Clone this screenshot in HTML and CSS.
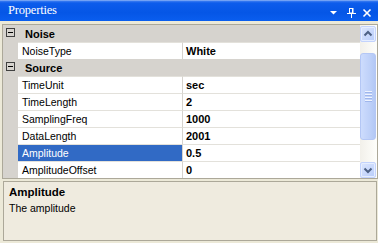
FILE: index.html
```html
<!DOCTYPE html>
<html>
<head>
<meta charset="utf-8">
<link rel="stylesheet" href="styles.css">
</head>
<body>
<div class="window">
  <div class="titlebar">
    <span class="title">Properties</span>
    <svg class="tools" width="45" height="21" viewBox="0 0 45 21">
      <polygon points="1,11 8,11 4.5,14.5" fill="#fff"/>
      <rect x="20.5" y="8.5" width="3" height="4.5" fill="none" stroke="#fff" stroke-width="1"/>
      <rect x="23" y="8" width="1.5" height="5" fill="#fff"/>
      <rect x="18" y="13" width="9" height="1" fill="#fff"/>
      <rect x="22" y="14" width="1" height="4" fill="#fff"/>
      <line x1="34.5" y1="9.5" x2="41.5" y2="16.5" stroke="#fff" stroke-width="1.6"/>
      <line x1="41.5" y1="9.5" x2="34.5" y2="16.5" stroke="#fff" stroke-width="1.6"/>
    </svg>
  </div>
  <div class="grid">
    <div class="rows">
      <div class="cat"><span class="box"><span class="minus"></span></span><span class="catname">Noise</span></div>
      <div class="prop"><span class="gutter"></span><span class="name">NoiseType</span><span class="val">White</span></div>
      <div class="cat"><span class="box"><span class="minus"></span></span><span class="catname">Source</span></div>
      <div class="prop"><span class="gutter"></span><span class="name">TimeUnit</span><span class="val">sec</span></div>
      <div class="prop"><span class="gutter"></span><span class="name">TimeLength</span><span class="val">2</span></div>
      <div class="prop"><span class="gutter"></span><span class="name">SamplingFreq</span><span class="val">1000</span></div>
      <div class="prop"><span class="gutter"></span><span class="name">DataLength</span><span class="val">2001</span></div>
      <div class="prop"><span class="gutter"></span><span class="name selected">Amplitude</span><span class="val">0.5</span></div>
      <div class="prop"><span class="gutter"></span><span class="name">AmplitudeOffset</span><span class="val">0</span></div>
    </div>
    <div class="scroll">
      <div class="sbtn up">
        <svg width="14" height="14" viewBox="0 0 14 14"><polyline points="3.5,8.5 7,5 10.5,8.5" fill="none" stroke="#4d6185" stroke-width="2"/></svg>
      </div>
      <div class="thumb">
        <span class="grip"></span><span class="grip"></span><span class="grip"></span><span class="grip"></span>
      </div>
      <div class="sbtn down">
        <svg width="14" height="14" viewBox="0 0 14 14"><polyline points="3.5,5.5 7,9 10.5,5.5" fill="none" stroke="#4d6185" stroke-width="2"/></svg>
      </div>
    </div>
  </div>
  <div class="desc">
    <div class="desc-title">Amplitude</div>
    <div class="desc-text">The amplitude</div>
  </div>
</div>
</body>
</html>
```

FILE: styles.css
```css
html, body {
  margin: 0;
  padding: 0;
}
body {
  width: 378px;
  height: 243px;
  overflow: hidden;
  background: #ece9d8;
  font-family: "Liberation Sans", Arial, sans-serif;
  font-size: 11px;
  color: #000;
}
.window {
  display: flex;
  flex-direction: column;
  width: 378px;
  height: 243px;
}
.titlebar {
  height: 21px;
  flex: none;
  display: flex;
  align-items: center;
  justify-content: space-between;
  background: linear-gradient(to bottom, #a9c6f7 0, #3a7cf2 1px, #0d5ceb 3px, #0556e6 60%, #0a5eef 100%);
}
.title {
  color: #fff;
  font-family: "Liberation Serif", "Times New Roman", serif;
  font-size: 12.5px;
  padding-left: 8px;
  letter-spacing: -0.2px;
  line-height: 21px;
}
.tools {
  display: block;
  margin-right: 4px;
}
.grid {
  flex: none;
  margin: 3px 0 0 2px;
  border: 1px solid #aca899;
  height: 153px;
  display: flex;
  background: #fff;
}
.rows {
  width: 357px;
  display: flex;
  flex-direction: column;
}
.cat {
  height: 16px;
  border-top: 1px solid #d6d3ce;
  background: #d6d3ce;
  display: flex;
  align-items: flex-start;
}
.box {
  width: 7px;
  height: 7px;
  border: 1px solid #404040;
  margin: 2px 0 0 3px;
  display: flex;
  align-items: center;
  justify-content: center;
}
.minus {
  width: 5px;
  height: 1px;
  background: #000;
}
.catname {
  font-weight: bold;
  line-height: 16px;
  margin-left: 10px;
}
.prop {
  height: 17px;
  display: flex;
}
.gutter {
  width: 15px;
  background: #d6d3ce;
}
.name {
  width: 160px;
  padding-left: 4px;
  border-top: 1px solid #e3e1db;
  border-right: 1px solid #d6d3ce;
  line-height: 16px;
  font-size: 10.5px;
  white-space: nowrap;
}
.name.selected {
  background: #316ac5;
  color: #fff;
}
.val {
  flex: 1;
  padding-left: 3px;
  border-top: 1px solid #e3e1db;
  font-weight: bold;
  line-height: 16px;
}
.scroll {
  width: 17px;
  background: linear-gradient(to right, #f2f0ea, #fefefb);
  display: flex;
  flex-direction: column;
}
.sbtn {
  width: 14px;
  height: 14px;
  border: 1px solid #c3d3fd;
  border-radius: 2px;
  background: linear-gradient(135deg, #dce6fd, #b9cdfb);
  box-shadow: inset 0 0 0 1px #e6eefe;
  display: flex;
  align-items: center;
  justify-content: center;
}
.sbtn svg {
  display: block;
}
.up {
  margin-top: 1px;
}
.down {
  margin-top: 22px;
}
.thumb {
  margin-top: 11px;
  width: 14px;
  height: 85px;
  border: 1px solid #b4c7f5;
  border-radius: 3px;
  background: linear-gradient(to right, #cddcfd, #bccff8 70%, #b3c8f5);
  display: flex;
  flex-direction: column;
  align-items: center;
  justify-content: center;
  gap: 1px;
}
.grip {
  width: 7px;
  height: 1px;
  background: #eef3fe;
  box-shadow: 0 1px 0 #9fb6ec;
  margin-bottom: 1px;
}
.desc {
  flex: none;
  margin: 2px 0 0 3px;
  height: 56px;
  border: 1px solid #aca899;
  background: #efebdf;
  padding: 2px 0 0 5px;
  width: 367px;
}
.desc-title {
  font-weight: bold;
  font-size: 11.5px;
  line-height: 16px;
}
.desc-text {
  font-size: 10.5px;
  line-height: 16px;
}
```
